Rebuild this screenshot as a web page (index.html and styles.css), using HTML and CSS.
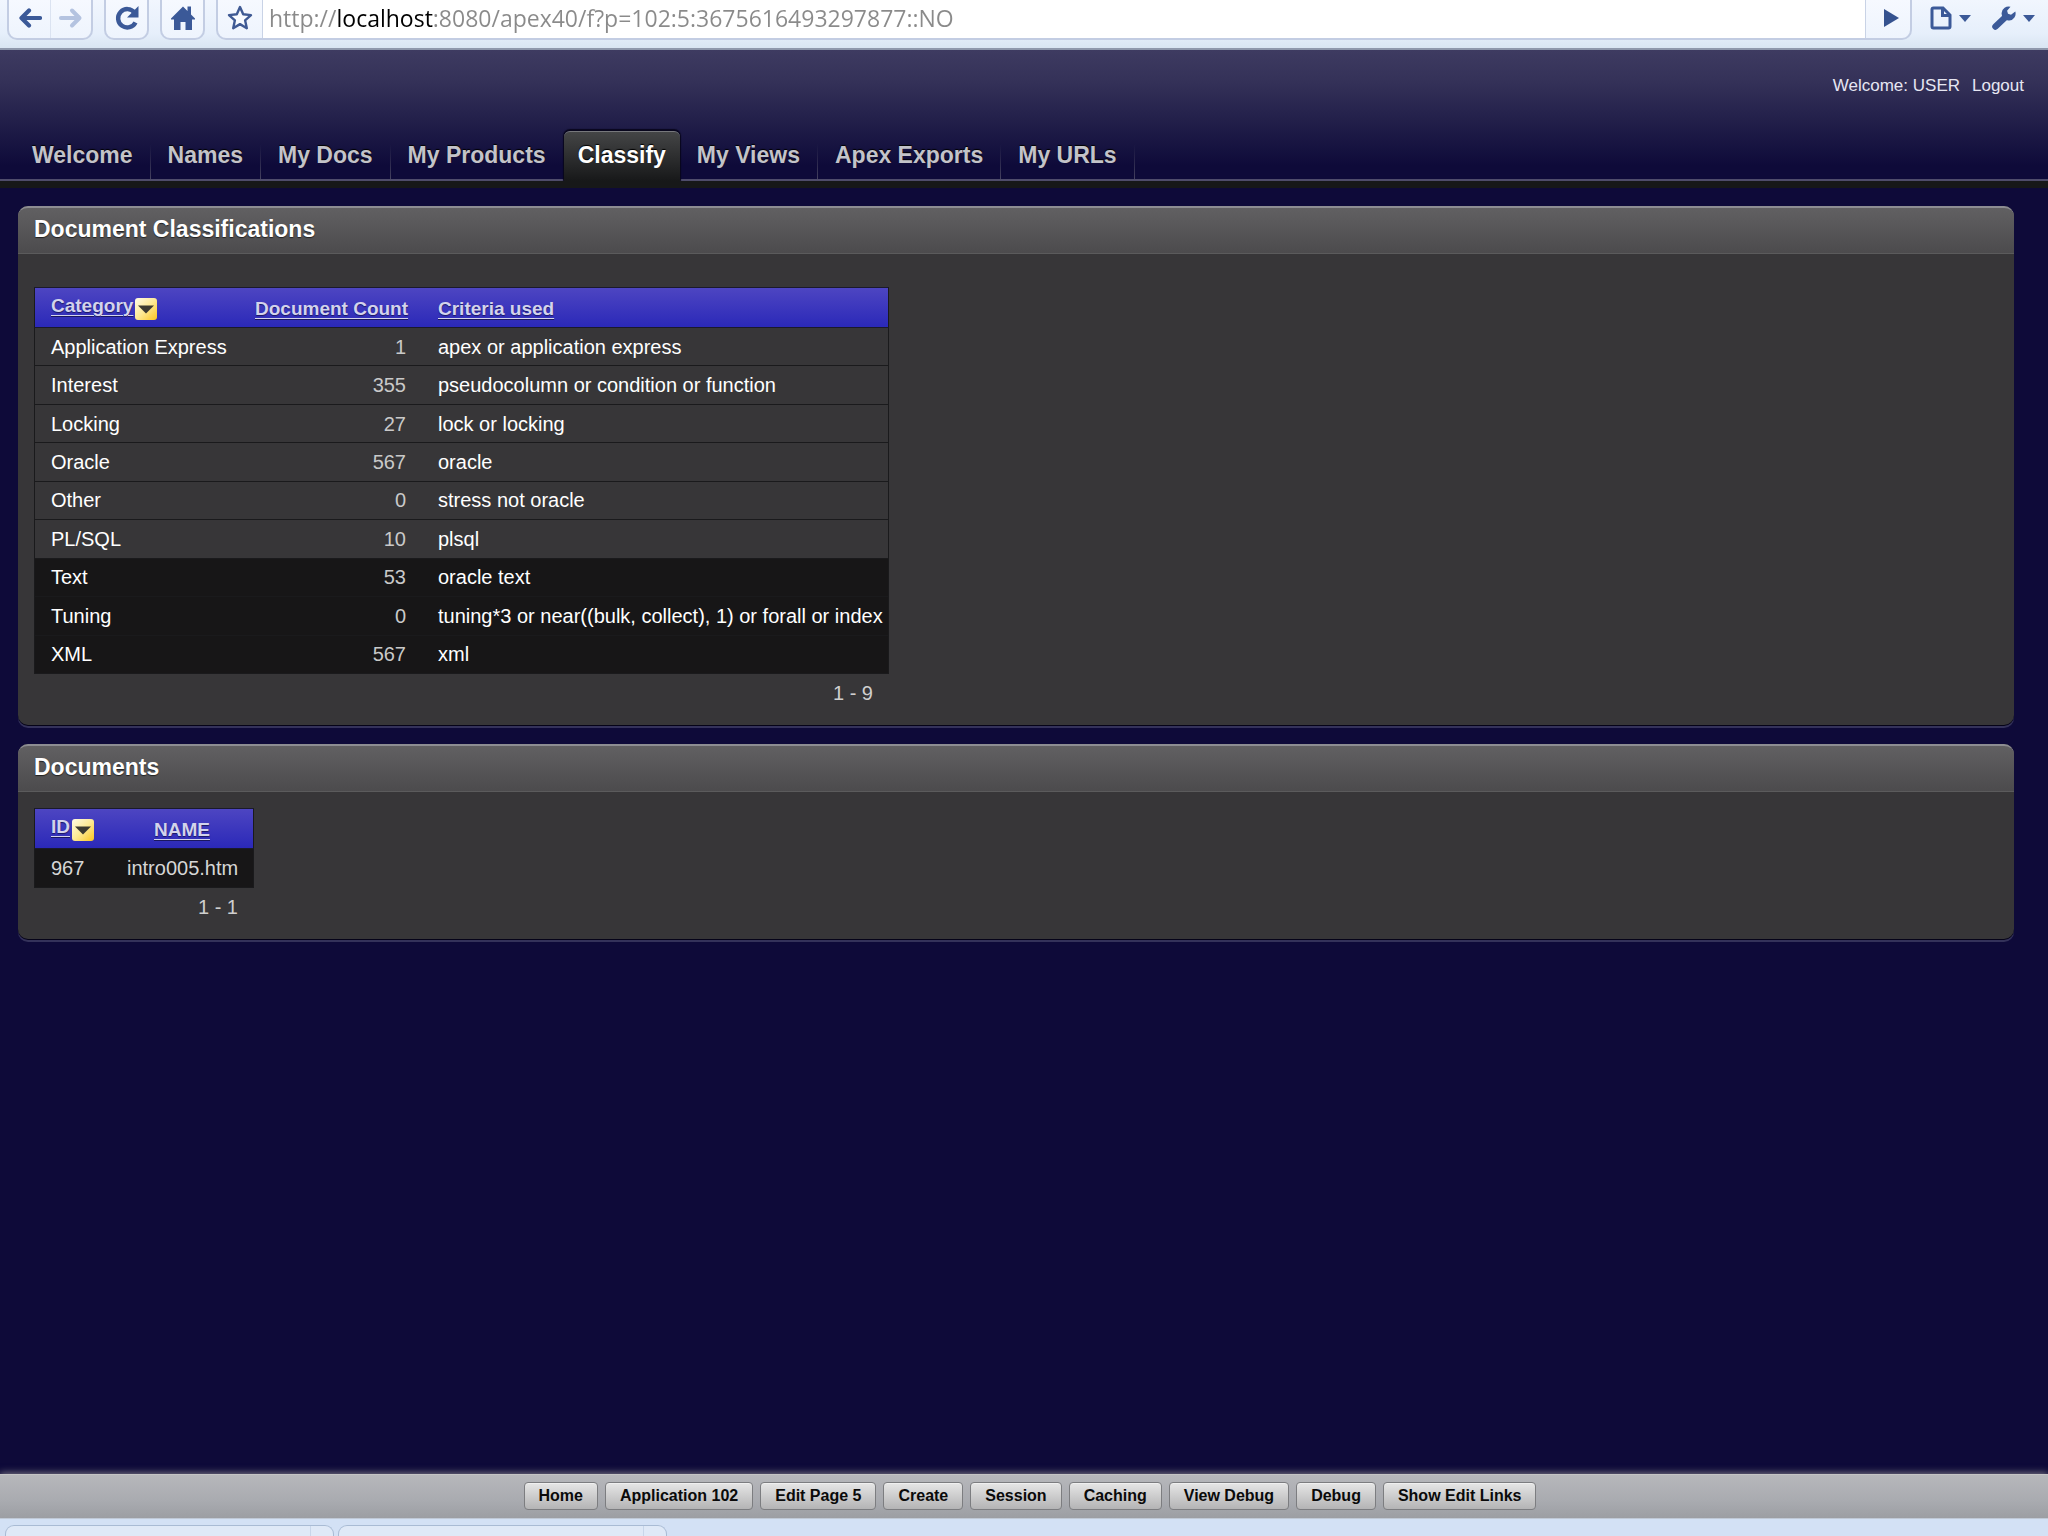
FILE: index.html
```html
<!DOCTYPE html>
<html lang="en">
<head>
<meta charset="utf-8">
<title>Classify</title>
<link rel="stylesheet" href="styles.css">
</head>
<body>
<div class="browser-bar">
  <div class="btn-group">
    <button class="chrome-btn" aria-label="Back"><svg width="24" height="22" viewBox="0 0 24 22"><path d="M22 11H4M11 3.500L3.500 11l7.500 7.500" fill="none" stroke="#3b5998" stroke-width="4.200" stroke-linecap="round" stroke-linejoin="round"/></svg></button>
    <button class="chrome-btn divided" aria-label="Forward"><svg width="24" height="22" viewBox="0 0 24 22"><path d="M2 11h18M13 3.500l7.500 7.500-7.500 7.500" fill="none" stroke="#b4c3e0" stroke-width="4" stroke-linecap="round" stroke-linejoin="round"/></svg></button>
  </div>
  <div class="btn-group">
    <button class="chrome-btn" aria-label="Reload"><svg width="26" height="26" viewBox="0 0 26 26"><path d="M20.500 7.500A9.200 9.200 0 1 0 21.500 17.500" fill="none" stroke="#3b5998" stroke-width="4.400"/><path d="M24.500 1v11.500H13z" fill="#3b5998"/></svg></button>
  </div>
  <div class="btn-group">
    <button class="chrome-btn" aria-label="Home"><svg width="26" height="26" viewBox="0 0 26 26"><path d="M1 13.500L13 1.500l4.500 4.500V1.500H21v8l4 4v1H22V25h-6.500v-8h-5v8H4V14.500H1z" fill="#3b5998"/></svg></button>
  </div>
  <div class="address">
    <button class="chrome-btn" aria-label="Bookmark"><svg width="28" height="28" viewBox="0 0 28 28"><path d="M14 3l3.200 7.300 7.800.8-5.900 5.200 1.700 7.900L14 20.100 7.200 24.200l1.700-7.900L3 11.100l7.800-.8z" fill="#f8fbff" stroke="#3f5a94" stroke-width="2.400" stroke-linejoin="round"/></svg></button>
    <div class="url-box"><input class="url" type="text" aria-label="Address" value="http://localhost:8080/apex40/f?p=102:5:3675616493297877::NO"></div>
    <button class="chrome-btn go" aria-label="Go"><svg width="16" height="18" viewBox="0 0 16 18"><path d="M1 0l15 9L1 18z" fill="#35528f"/></svg></button>
  </div>
  <div class="menus">
    <button class="menu-btn" aria-label="Page menu"><svg width="22" height="24" viewBox="0 0 22 24"><path d="M2 3.500Q2 2 3.500 2H13l7 7v11.500q0 1.500-1.500 1.500h-15Q2 22 2 20.500zM12.500 2.500V9.500H20" fill="none" stroke="#3b5998" stroke-width="3"/></svg><svg width="12" height="7" viewBox="0 0 12 7"><path d="M0 0h12L6 7z" fill="#3b5998"/></svg></button>
    <button class="menu-btn" aria-label="Tools menu"><svg width="24" height="24" viewBox="0 0 24 24"><path d="M3.500 20.500L13 11.500" fill="none" stroke="#3b5998" stroke-width="6.500" stroke-linecap="round"/><path d="M18.500.8A7 7 0 1 0 23.300 5.500L19 8.800l-3-1-.9-3z" fill="#3b5998"/></svg><svg width="12" height="7" viewBox="0 0 12 7"><path d="M0 0h12L6 7z" fill="#3b5998"/></svg></button>
  </div>
</div>

<header class="app-header">
  <div class="user-line"><span>Welcome: USER</span><a href="#">Logout</a></div>
  <nav class="tabs">
    <a href="#">Welcome</a>
    <a href="#">Names</a>
    <a href="#">My Docs</a>
    <a href="#" class="before-active">My Products</a>
    <a href="#" class="active">Classify</a>
    <a href="#">My Views</a>
    <a href="#">Apex Exports</a>
    <a href="#">My URLs</a>
  </nav>
</header>

<main class="content">
  <section class="panel">
    <h2>Document Classifications</h2>
    <div class="panel-body roomy">
      <table class="report classes">
        <colgroup><col class="c-cat"><col class="c-count"><col class="c-crit"></colgroup>
        <thead>
          <tr><th><a href="#">Category</a><svg class="sort" width="22" height="22" viewBox="0 0 22 22"><use href="#sort-icon"/></svg></th><th class="num"><a href="#">Document Count</a></th><th><a href="#">Criteria used</a></th></tr>
        </thead>
        <tbody>
          <tr><td>Application Express</td><td class="num">1</td><td>apex or application express</td></tr>
          <tr><td>Interest</td><td class="num">355</td><td>pseudocolumn or condition or function</td></tr>
          <tr><td>Locking</td><td class="num">27</td><td>lock or locking</td></tr>
          <tr><td>Oracle</td><td class="num">567</td><td>oracle</td></tr>
          <tr><td>Other</td><td class="num">0</td><td>stress not oracle</td></tr>
          <tr><td>PL/SQL</td><td class="num">10</td><td>plsql</td></tr>
          <tr class="dark"><td>Text</td><td class="num">53</td><td>oracle text</td></tr>
          <tr class="dark"><td>Tuning</td><td class="num">0</td><td>tuning*3 or near((bulk, collect), 1) or forall or index</td></tr>
          <tr class="dark"><td>XML</td><td class="num">567</td><td>xml</td></tr>
        </tbody>
        <tfoot><tr><td colspan="3">1 - 9</td></tr></tfoot>
      </table>
    </div>
  </section>

  <section class="panel">
    <h2>Documents</h2>
    <div class="panel-body">
      <table class="report docs">
        <colgroup><col class="c-id"><col class="c-name"></colgroup>
        <thead>
          <tr><th><a href="#">ID</a><svg class="sort" width="22" height="22" viewBox="0 0 22 22"><use href="#sort-icon"/></svg></th><th class="mid"><a href="#">NAME</a></th></tr>
        </thead>
        <tbody>
          <tr class="dark"><td>967</td><td>intro005.htm</td></tr>
        </tbody>
        <tfoot><tr><td colspan="2">1 - 1</td></tr></tfoot>
      </table>
    </div>
  </section>
</main>

<div class="dev-bar">
  <button>Home</button>
  <button>Application 102</button>
  <button>Edit Page 5</button>
  <button>Create</button>
  <button>Session</button>
  <button>Caching</button>
  <button>View Debug</button>
  <button>Debug</button>
  <button>Show Edit Links</button>
</div>
<div class="download-shelf">
  <div class="shelf-item"></div>
  <div class="shelf-item"></div>
</div>

<svg class="defs" width="0" height="0" aria-hidden="true">
  <defs>
    <linearGradient id="gold" x1="0" y1="0" x2="1" y2="1"><stop offset="0" stop-color="#fffbe6"/><stop offset="0.500" stop-color="#fde995"/><stop offset="1" stop-color="#fbc61f"/></linearGradient>
    <symbol id="sort-icon" viewBox="0 0 22 22"><rect width="22" height="22" rx="3" fill="url(#gold)"/><path d="M3 7.500h16l-8 8z" fill="#3c3a30"/></symbol>
  </defs>
</svg>
</body>
</html>
```
FILE: styles.css
```css
* { box-sizing: border-box; }

body {
  margin: 0;
  min-height: 100vh;
  display: flex;
  flex-direction: column;
  background: #0e0a39;
  color: #fff;
  font-family: "Liberation Sans", Arial, sans-serif;
  font-size: 20px;
}

button { font-family: inherit; margin: 0; padding: 0; border: 0; background: none; }
svg { display: block; flex: none; }
.defs { position: absolute; }

/* Browser toolbar */
.browser-bar {
  display: flex;
  align-items: flex-start;
  height: 50px;
  padding: 0 13px 0 7px;
  gap: 11px;
  background: linear-gradient(#f1f6fe, #e6effb 70%, #d9e5f2);
  border-bottom: 2px solid #8f98ac;
}
.btn-group, .address {
  display: flex;
  height: 40px;
  border: 2px solid #c3cde3;
  border-top: 0;
  border-radius: 0 0 10px 10px;
  background: linear-gradient(#f6f9ff, #eef4fd);
}
.chrome-btn {
  display: flex;
  align-items: center;
  justify-content: center;
  width: 41px;
  padding-bottom: 2px;
}
.divided { border-left: 1px solid #dbe3f1; }
.address { flex: 1; }
.address .chrome-btn { width: 44px; }
.address .go { padding-left: 6px; }
.url-box { flex: 1; display: flex; background: #fff; border: 1px solid #c9d3e6; border-width: 0 1px; }
.url {
  flex: 1;
  padding: 0 0 2px 6px;
  border: 0;
  outline: 0;
  font: 23px/36px "Open Sans", "Noto Sans", sans-serif;
  color: transparent;
  background: linear-gradient(90deg, #8a8a8a 74px, #000 74px, #000 170px, #8a8a8a 170px);
  -webkit-background-clip: text;
  background-clip: text;
}
.menus { display: flex; gap: 21px; padding-left: 7px; }
.menu-btn { display: flex; align-items: center; gap: 7px; height: 36px; }

/* Application header */
.app-header {
  display: flex;
  flex-direction: column;
  justify-content: space-between;
  height: 131px;
  background: linear-gradient(#3e3b61, #343158 25%, #1c1945 65%, #0e0a39 90%);
  border-bottom: 2px solid #4f4c6b;
  box-shadow: 0 7px 0 #171819;
}
.user-line {
  display: flex;
  justify-content: flex-end;
  gap: 12px;
  padding: 26px 24px 0;
  font-size: 17px;
  line-height: 20px;
  color: #e6e6f2;
}
.user-line a { color: inherit; text-decoration: none; }
.tabs { display: flex; align-items: flex-end; padding-left: 15px; margin-bottom: -2px; }
.tabs a {
  height: 51px;
  padding: 11px 18px 0 17px;
  font-size: 23px;
  font-weight: bold;
  line-height: 28px;
  color: #c3c3c9;
  text-decoration: none;
  text-shadow: 0 -1px 1px #000;
  background: linear-gradient(transparent, #45425f) right 14px / 1px 35px no-repeat;
}
.tabs a.before-active { background: none; }
.tabs a.active {
  height: 50px;
  padding: 9px 14px 0;
  color: #fff;
  background: linear-gradient(#444546, #171819);
  border-top: 1px solid #77787c;
  border-radius: 6px 6px 0 0;
  box-shadow: 0 -1px 1px 1px #08061c;
  clip-path: inset(-4px -4px 0 -4px);
}

/* Panels */
.content {
  flex: 1;
  display: flex;
  flex-direction: column;
  gap: 19px;
  padding: 25px 34px 24px 18px;
}
.panel {
  border-radius: 10px;
  background: #373638;
  box-shadow: 0 1px 0 #050318, 0 3px 0 #34325a;
}
.panel h2 {
  margin: 0;
  height: 48px;
  padding: 7px 16px 0;
  font-size: 23px;
  line-height: 28px;
  text-shadow: 0 1px 1px #222;
  border-top: 2px solid #8d8d92;
  border-bottom: 1px solid #5b5b5c;
  border-radius: 10px 10px 0 0;
  background: linear-gradient(#616062, #4c4b4d);
}
.panel-body { padding: 16px 16px 13px; }
.panel-body.roomy { padding-top: 33px; padding-bottom: 13px; }

/* Reports */
.report { table-layout: fixed; border-collapse: separate; border-spacing: 0; }
.classes { width: 855px; height: 425px; }
.docs { width: 220px; }
.c-cat { width: 205px; }
.c-count { width: 183px; }
.c-id { width: 77px; }

.report th, .report td { padding: 0 0 0 16px; text-align: left; white-space: nowrap; }
.report th:first-child, .report tbody td:first-child { border-left: 1px solid #1a1a1c; }
.report th:last-child, .report tbody td:last-child { border-right: 1px solid #1a1a1c; }
.report thead { background: linear-gradient(#4e46c2, #2a28b8); }
.report th {
  height: 41px;
  padding-bottom: 7px;
  vertical-align: bottom;
  font-size: 19px;
  line-height: 22px;
  border-top: 1px solid #1a1a2c;
  border-bottom: 1px solid #1a1a2c;
}
.report th a { color: #d3d3ec; text-shadow: 0 1px 1px #1a1760; text-underline-offset: 3px; text-decoration-thickness: 1px; }
.report .sort { display: inline-block; margin-left: 2px; vertical-align: -8px; }
.report td { height: 38px; line-height: 22px; border-bottom: 1px solid #1a1a1c; }
.report .num { padding-right: 16px; text-align: right; }
.report td.num { color: #c9c9c9; }
.report th.mid { padding-right: 16px; text-align: center; }
.report .dark td { background: #171617; }
.docs tbody td { height: 39px; color: #d6d6d6; }
.report tfoot td { padding-right: 16px; text-align: right; color: #cfcfcf; border: 0; }

/* Developer toolbar */
.dev-bar {
  display: flex;
  justify-content: center;
  gap: 7px;
  height: 44px;
  padding: 7px 0 0 12px;
  background: linear-gradient(#b6b7bb, #a9abb0 60%, #9c9ea3);
  border-top: 1px solid #c4c4c4;
  box-shadow: 0 -1px 7px #7d7b85;
}
.dev-bar button {
  height: 28px;
  padding: 0 14px;
  border: 1px solid #7c7d80;
  border-radius: 4px;
  background: linear-gradient(#e6e6e6, #b4b4b5);
  box-shadow: inset 0 1px 0 #f0f0f0;
  color: #0a0a0a;
  font-size: 16px;
  font-weight: bold;
  line-height: 24px;
}

/* Download shelf */
.download-shelf {
  display: flex;
  gap: 4px;
  height: 18px;
  padding: 6px 0 0 5px;
  background: #d3e1f5;
  border-top: 1px solid #c0c9d6;
}
.shelf-item {
  width: 329px;
  border: 1px solid #a9bbd4;
  border-bottom: 0;
  border-radius: 9px 9px 0 0;
  background: linear-gradient(90deg, transparent 304px, #c8d6ea 304px, #c8d6ea 305px, transparent 305px), #dfe9f7;
}
```
